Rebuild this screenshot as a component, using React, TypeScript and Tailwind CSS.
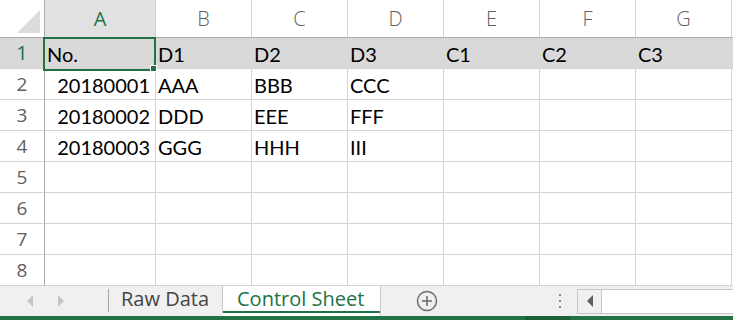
import React from 'react';

const columns = ['A', 'B', 'C', 'D', 'E', 'F', 'G'];

const rows: string[][] = [
  ['No.', 'D1', 'D2', 'D3', 'C1', 'C2', 'C3'],
  ['20180001', 'AAA', 'BBB', 'CCC', '', '', ''],
  ['20180002', 'DDD', 'EEE', 'FFF', '', '', ''],
  ['20180003', 'GGG', 'HHH', 'III', '', '', ''],
  ['', '', '', '', '', '', ''],
  ['', '', '', '', '', '', ''],
  ['', '', '', '', '', '', ''],
  ['', '', '', '', '', '', ''],
];

const headFont = { fontFamily: '"Open Sans", "Noto Sans", sans-serif' };
const cellFont = { fontFamily: 'Lato, "Open Sans", sans-serif' };

const App: React.FC = () => {
  return (
    <div className="relative w-[733px] h-[320px] overflow-hidden bg-white flex flex-col">
      {/* sheet grid */}
      <div className="grid grid-cols-[45px_111px_96px_96px_96px_96px_96px_96px_1fr]">
        {/* corner */}
        <div className="h-[38px] border-r border-b border-[#ababab] flex items-end justify-end">
          <svg width="45" height="37" className="block">
            <polygon points="40,10 40,33 17,33" fill="#dcdcdc" />
          </svg>
        </div>
        {columns.map((c, i) => (
          <div
            key={c}
            style={headFont}
            className={
              i === 0
                ? 'h-[38px] border-r border-r-[#d4d4d4] border-b border-b-[#ababab] bg-[#e1e1e1] text-[#217346] text-[20px] flex items-center justify-center'
                : 'h-[38px] border-r border-r-[#d4d4d4] border-b border-b-[#ababab] text-[#5f5f5f] text-[20px] font-light flex items-center justify-center'
            }
          >
            {c}
          </div>
        ))}
        <div className="h-[38px] border-b border-[#ababab]" />

        {rows.map((r, ri) => (
          <React.Fragment key={ri}>
            <div
              style={headFont}
              className={
                ri === 0
                  ? 'h-[31px] border-r border-r-[#ababab] border-b border-b-[#d4d4d4] bg-[#d9d9d9] text-[#217346] text-[20px] flex items-center justify-center'
                  : 'h-[31px] border-r border-r-[#ababab] border-b border-b-[#d4d4d4] text-[#5f5f5f] text-[19px] flex items-center justify-center'
              }
            >
              {ri + 1}
            </div>
            {r.map((v, ci) => (
              <div
                key={ci}
                style={cellFont}
                className={[
                  'h-[31px] border-b border-b-[#d4d4d4] text-[20px] leading-none text-black flex items-end pb-[4px] whitespace-nowrap',
                  ri === 0 ? 'bg-[#d9d9d9] border-r border-r-[#d9d9d9]' : 'border-r border-r-[#d4d4d4]',
                  ri > 0 && ci === 0 ? 'justify-end pr-[5px]' : 'pl-[2px]',
                ].join(' ')}
              >
                {v}
              </div>
            ))}
            <div
              className={
                ri === 0
                  ? 'h-[31px] border-b border-b-[#d4d4d4] bg-[#d9d9d9]'
                  : 'h-[31px] border-b border-b-[#d4d4d4]'
              }
            />
          </React.Fragment>
        ))}
      </div>

      {/* selection A1 */}
      <div className="absolute left-[43px] top-[37px] w-[113px] h-[34px] border-2 border-[#217346]" />
      <div className="absolute left-[150px] top-[65px] w-[7px] h-[7px] bg-[#217346] border border-white" />

      {/* sheet tabs */}
      <div className="flex h-[30px] bg-[#f0f0f0]" style={headFont}>
        <div className="w-[108px] flex items-center pl-[26px] gap-[23px]">
          <svg width="8" height="12">
            <polygon points="7,0 7,12 1,6" fill="#c6c6c6" />
          </svg>
          <svg width="8" height="12">
            <polygon points="1,0 1,12 7,6" fill="#c6c6c6" />
          </svg>
        </div>
        <div className="w-px mt-[3px] mb-[4px] bg-[#a6a6a6]" />
        <div className="w-[114px] border-r border-[#c6c6c6] mb-[3px] pl-[12px] flex items-center text-[20px] text-[#444] leading-none pb-[2px]">
          Raw Data
        </div>
        <div className="w-[157px] bg-white flex flex-col">
          <div className="flex-1 flex items-center pl-[14px] text-[20px] text-[#217346] leading-none">
            Control Sheet
          </div>
          <div className="h-[2px] bg-[#217346] mb-[3px]" />
        </div>
        <div className="flex-1 flex items-center border-l border-[#c6c6c6]">
          <svg width="24" height="24" className="ml-[34px]">
            <circle cx="12" cy="12" r="9.5" fill="none" stroke="#6e6e6e" strokeWidth="1.5" />
            <line x1="12" y1="7" x2="12" y2="17" stroke="#6e6e6e" strokeWidth="1.6" />
            <line x1="7" y1="12" x2="17" y2="12" stroke="#6e6e6e" strokeWidth="1.6" />
          </svg>
          <div className="ml-[120px] flex flex-col gap-[4px]">
            <div className="w-[2px] h-[2px] bg-[#8a8a8a]" />
            <div className="w-[2px] h-[2px] bg-[#8a8a8a]" />
            <div className="w-[2px] h-[2px] bg-[#8a8a8a]" />
          </div>
          <div className="ml-[16px] w-[25px] h-[25px] border border-[#c6c6c6] bg-[#f0f0f0] flex items-center justify-center">
            <svg width="8" height="12">
              <polygon points="7,0 7,12 1,6" fill="#606060" />
            </svg>
          </div>
          <div className="flex-1 h-[25px] bg-white border-y border-[#c6c6c6]" />
        </div>
      </div>

      {/* status strip */}
      <div className="flex-1 bg-[#217346] flex">
        <div className="ml-[525px] w-[45px] bg-[#1b5e38]" />
      </div>
    </div>
  );
};

export default App;
